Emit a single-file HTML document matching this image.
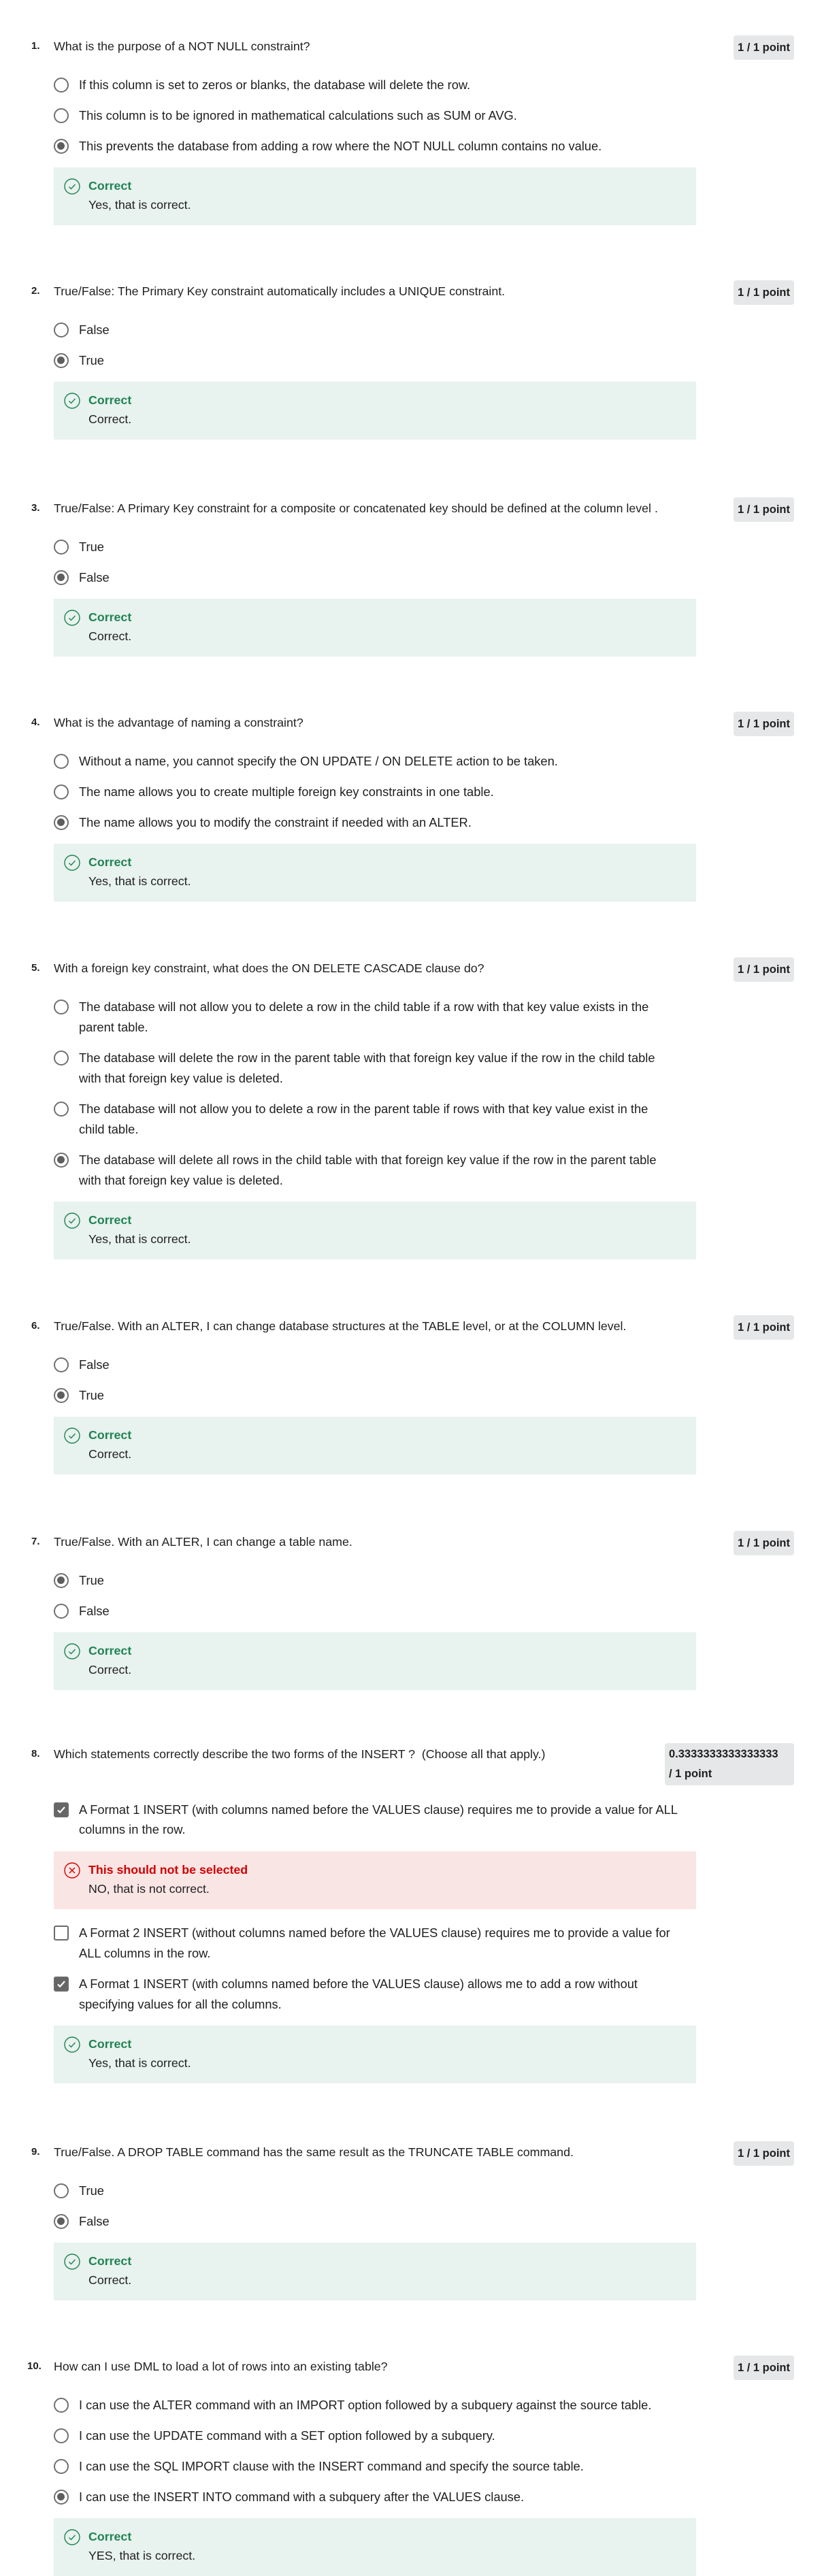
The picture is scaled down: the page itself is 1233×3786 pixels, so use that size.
<!DOCTYPE html>
<html><head><meta charset="utf-8">
<style>
*{box-sizing:border-box;margin:0;padding:0}
body{width:1233px;height:3786px;background:#fff;position:relative;overflow:hidden;font-family:"Liberation Sans",Arial,sans-serif;color:#1f1f1f;font-size:18.3px}
.q{position:absolute;left:0;width:1233px}
.hd{position:relative;height:36px}
.num{position:absolute;left:46px;top:1px;line-height:30px;font-weight:bold;font-size:15px}
.ttl{position:absolute;left:79px;top:1px;line-height:30px;white-space:nowrap;font-size:17.8px}
.badge{position:absolute;right:66px;top:0;background:#e5e7e8;border-radius:4px;font-weight:bold;line-height:36px;padding:0 6px;font-size:16.5px;white-space:nowrap}
.badge.two{width:190px;line-height:29px;padding:2px 6px;white-space:normal}
.opts{margin-top:22px;display:flex;flex-direction:column;gap:15px}
.o{position:relative;margin-left:79px;padding-left:37px;line-height:30px;white-space:nowrap}
.r{position:absolute;left:0;top:4px;width:22px;height:22px;border:2.5px solid #707070;border-radius:50%}
.r.on::after{content:"";position:absolute;left:3px;top:3px;width:11px;height:11px;border-radius:50%;background:#5e5e5e}
.c{position:absolute;left:0;top:4px;width:22px;height:22px;border:2px solid #6a6a6a;border-radius:3px;background:#fff}
.c.on{background:#666}
.c svg{position:absolute;left:2px;top:2px}
.fb{margin-left:79px;width:944px;margin-top:1px;background:#e8f2ee;position:relative;padding:13px 0 14px 51px;line-height:28px;height:85px;font-size:17.8px}
.fb.bad{background:#fae5e5}
.fb .t{font-weight:bold;color:#1f8354}
.fb.bad .t{color:#d30001}
.fb svg{position:absolute;left:15px;top:16px}
</style></head><body>

<!-- Q1 -->
<div class="q" style="top:52px">
 <div class="hd"><span class="num">1.</span><span class="ttl">What is the purpose of a NOT NULL constraint?</span><span class="badge">1 / 1 point</span></div>
 <div class="opts">
  <div class="o"><span class="r"></span>If this column is set to zeros or blanks, the database will delete the row.</div>
  <div class="o"><span class="r"></span>This column is to be ignored in mathematical calculations such as SUM or AVG.</div>
  <div class="o"><span class="r on"></span>This prevents the database from adding a row where the NOT NULL column contains no value.</div>
  <div class="fb"><svg width="24" height="24" viewBox="0 0 24 24"><circle cx="12" cy="12" r="11" fill="none" stroke="#1f8354" stroke-width="1.4"/><path d="M7.5 12.5l3 3 6-6.5" fill="none" stroke="#1f8354" stroke-width="1.4"/></svg><div class="t">Correct</div><div>Yes, that is correct.</div></div>
 </div>
</div>

<!-- Q2 -->
<div class="q" style="top:412px">
 <div class="hd"><span class="num">2.</span><span class="ttl">True/False: The Primary Key constraint automatically includes a UNIQUE constraint.</span><span class="badge">1 / 1 point</span></div>
 <div class="opts">
  <div class="o"><span class="r"></span>False</div>
  <div class="o"><span class="r on"></span>True</div>
  <div class="fb"><svg width="24" height="24" viewBox="0 0 24 24"><circle cx="12" cy="12" r="11" fill="none" stroke="#1f8354" stroke-width="1.4"/><path d="M7.5 12.5l3 3 6-6.5" fill="none" stroke="#1f8354" stroke-width="1.4"/></svg><div class="t">Correct</div><div>Correct.</div></div>
 </div>
</div>

<!-- Q3 -->
<div class="q" style="top:731px">
 <div class="hd"><span class="num">3.</span><span class="ttl">True/False: A Primary Key constraint for a composite or concatenated key should be defined at the column level .</span><span class="badge">1 / 1 point</span></div>
 <div class="opts">
  <div class="o"><span class="r"></span>True</div>
  <div class="o"><span class="r on"></span>False</div>
  <div class="fb"><svg width="24" height="24" viewBox="0 0 24 24"><circle cx="12" cy="12" r="11" fill="none" stroke="#1f8354" stroke-width="1.4"/><path d="M7.5 12.5l3 3 6-6.5" fill="none" stroke="#1f8354" stroke-width="1.4"/></svg><div class="t">Correct</div><div>Correct.</div></div>
 </div>
</div>

<!-- Q4 -->
<div class="q" style="top:1046px">
 <div class="hd"><span class="num">4.</span><span class="ttl">What is the advantage of naming a constraint?</span><span class="badge">1 / 1 point</span></div>
 <div class="opts">
  <div class="o"><span class="r"></span>Without a name, you cannot specify the ON UPDATE / ON DELETE action to be taken.</div>
  <div class="o"><span class="r"></span>The name allows you to create multiple foreign key constraints in one table.</div>
  <div class="o"><span class="r on"></span>The name allows you to modify the constraint if needed with an ALTER.</div>
  <div class="fb"><svg width="24" height="24" viewBox="0 0 24 24"><circle cx="12" cy="12" r="11" fill="none" stroke="#1f8354" stroke-width="1.4"/><path d="M7.5 12.5l3 3 6-6.5" fill="none" stroke="#1f8354" stroke-width="1.4"/></svg><div class="t">Correct</div><div>Yes, that is correct.</div></div>
 </div>
</div>

<!-- Q5 -->
<div class="q" style="top:1407px">
 <div class="hd"><span class="num">5.</span><span class="ttl">With a foreign key constraint, what does the ON DELETE CASCADE clause do?</span><span class="badge">1 / 1 point</span></div>
 <div class="opts">
  <div class="o"><span class="r"></span>The database will not allow you to delete a row in the child table if a row with that key value exists in the<br>parent table.</div>
  <div class="o"><span class="r"></span>The database will delete the row in the parent table with that foreign key value if the row in the child table<br>with that foreign key value is deleted.</div>
  <div class="o"><span class="r"></span>The database will not allow you to delete a row in the parent table if rows with that key value exist in the<br>child table.</div>
  <div class="o"><span class="r on"></span>The database will delete all rows in the child table with that foreign key value if the row in the parent table<br>with that foreign key value is deleted.</div>
  <div class="fb"><svg width="24" height="24" viewBox="0 0 24 24"><circle cx="12" cy="12" r="11" fill="none" stroke="#1f8354" stroke-width="1.4"/><path d="M7.5 12.5l3 3 6-6.5" fill="none" stroke="#1f8354" stroke-width="1.4"/></svg><div class="t">Correct</div><div>Yes, that is correct.</div></div>
 </div>
</div>

<!-- Q6 -->
<div class="q" style="top:1933px">
 <div class="hd"><span class="num">6.</span><span class="ttl">True/False. With an ALTER, I can change database structures at the TABLE level, or at the COLUMN level.</span><span class="badge">1 / 1 point</span></div>
 <div class="opts">
  <div class="o"><span class="r"></span>False</div>
  <div class="o"><span class="r on"></span>True</div>
  <div class="fb"><svg width="24" height="24" viewBox="0 0 24 24"><circle cx="12" cy="12" r="11" fill="none" stroke="#1f8354" stroke-width="1.4"/><path d="M7.5 12.5l3 3 6-6.5" fill="none" stroke="#1f8354" stroke-width="1.4"/></svg><div class="t">Correct</div><div>Correct.</div></div>
 </div>
</div>

<!-- Q7 -->
<div class="q" style="top:2250px">
 <div class="hd"><span class="num">7.</span><span class="ttl">True/False. With an ALTER, I can change a table name.</span><span class="badge">1 / 1 point</span></div>
 <div class="opts">
  <div class="o"><span class="r on"></span>True</div>
  <div class="o"><span class="r"></span>False</div>
  <div class="fb"><svg width="24" height="24" viewBox="0 0 24 24"><circle cx="12" cy="12" r="11" fill="none" stroke="#1f8354" stroke-width="1.4"/><path d="M7.5 12.5l3 3 6-6.5" fill="none" stroke="#1f8354" stroke-width="1.4"/></svg><div class="t">Correct</div><div>Correct.</div></div>
 </div>
</div>

<!-- Q8 -->
<div class="q" style="top:2562px">
 <div class="hd" style="height:61px"><span class="num">8.</span><span class="ttl">Which statements correctly describe the two forms of the INSERT ?&nbsp; (Choose all that apply.)</span><span class="badge two">0.3333333333333333<br>/ 1 point</span></div>
 <div class="opts">
  <div class="o" style="line-height:29px"><span class="c on"><svg width="14" height="14" viewBox="0 0 14 14"><path d="M2 7.5l3.2 3.2L12 3" fill="none" stroke="#fff" stroke-width="2.2"/></svg></span>A Format 1 INSERT (with columns named before the VALUES clause) requires me to provide a value for ALL<br>columns in the row.</div>
  <div class="fb bad" style="margin-top:3px;margin-bottom:5px"><svg width="24" height="24" viewBox="0 0 24 24"><circle cx="12" cy="12" r="11" fill="none" stroke="#d30001" stroke-width="1.4"/><path d="M8 8l8 8M16 8l-8 8" fill="none" stroke="#d30001" stroke-width="1.4"/></svg><div class="t">This should not be selected</div><div>NO, that is not correct.</div></div>
  <div class="o"><span class="c"></span>A Format 2 INSERT (without columns named before the VALUES clause) requires me to provide a value for<br>ALL columns in the row.</div>
  <div class="o"><span class="c on"><svg width="14" height="14" viewBox="0 0 14 14"><path d="M2 7.5l3.2 3.2L12 3" fill="none" stroke="#fff" stroke-width="2.2"/></svg></span>A Format 1 INSERT (with columns named before the VALUES clause) allows me to add a row without<br>specifying values for all the columns.</div>
  <div class="fb"><svg width="24" height="24" viewBox="0 0 24 24"><circle cx="12" cy="12" r="11" fill="none" stroke="#1f8354" stroke-width="1.4"/><path d="M7.5 12.5l3 3 6-6.5" fill="none" stroke="#1f8354" stroke-width="1.4"/></svg><div class="t">Correct</div><div>Yes, that is correct.</div></div>
 </div>
</div>

<!-- Q9 -->
<div class="q" style="top:3147px">
 <div class="hd"><span class="num">9.</span><span class="ttl">True/False. A DROP TABLE command has the same result as the TRUNCATE TABLE command.</span><span class="badge">1 / 1 point</span></div>
 <div class="opts">
  <div class="o"><span class="r"></span>True</div>
  <div class="o"><span class="r on"></span>False</div>
  <div class="fb"><svg width="24" height="24" viewBox="0 0 24 24"><circle cx="12" cy="12" r="11" fill="none" stroke="#1f8354" stroke-width="1.4"/><path d="M7.5 12.5l3 3 6-6.5" fill="none" stroke="#1f8354" stroke-width="1.4"/></svg><div class="t">Correct</div><div>Correct.</div></div>
 </div>
</div>

<!-- Q10 -->
<div class="q" style="top:3462px">
 <div class="hd"><span class="num" style="left:40px">10.</span><span class="ttl">How can I use DML to load a lot of rows into an existing table?</span><span class="badge">1 / 1 point</span></div>
 <div class="opts">
  <div class="o"><span class="r"></span>I can use the ALTER command with an IMPORT option followed by a subquery against the source table.</div>
  <div class="o"><span class="r"></span>I can use the UPDATE command with a SET option followed by a subquery.</div>
  <div class="o"><span class="r"></span>I can use the SQL IMPORT clause with the INSERT command and specify the source table.</div>
  <div class="o"><span class="r on"></span>I can use the INSERT INTO command with a subquery after the VALUES clause.</div>
  <div class="fb"><svg width="24" height="24" viewBox="0 0 24 24"><circle cx="12" cy="12" r="11" fill="none" stroke="#1f8354" stroke-width="1.4"/><path d="M7.5 12.5l3 3 6-6.5" fill="none" stroke="#1f8354" stroke-width="1.4"/></svg><div class="t">Correct</div><div>YES, that is correct.</div></div>
 </div>
</div>

</body></html>
